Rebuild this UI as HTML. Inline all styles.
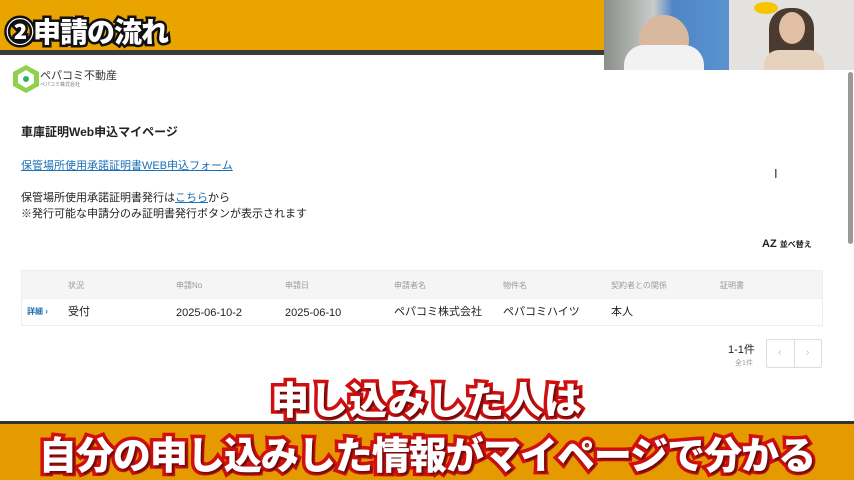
<!DOCTYPE html>
<html><head><meta charset="utf-8"><style>
*{margin:0;padding:0;box-sizing:border-box}
body{width:854px;height:480px;overflow:hidden;background:#fff;position:relative;font-family:"Liberation Sans","Noto Sans CJK JP",sans-serif;color:#222}
.abs{position:absolute}
.top{left:0;top:0;width:854px;height:50px;background:#e9a400}
.topline{left:0;top:50px;width:854px;height:5px;background:#3a3a3a}
.title{left:6px;top:11px;font-size:28px;font-weight:900;color:#fff;letter-spacing:-1px;-webkit-text-stroke:5px #111;paint-order:stroke fill;text-shadow:2px 2px 0 #111}
.cam1{left:604px;top:0;width:125px;height:70px;background:linear-gradient(90deg,#8a8f88 0,#c9cccb 40%,#4f86c6 55%,#5a93d0 100%)}
.cam2{left:729px;top:0;width:125px;height:70px;background:#e4e2df}
.sub{font-weight:900;color:#fff;-webkit-text-stroke:7px #d01010;paint-order:stroke fill;text-shadow:2px 2px 2px rgba(0,0,0,.5);white-space:nowrap}
.bot{left:0;top:424px;width:854px;height:56px;background:#e59a00}
.botline{left:0;top:421px;width:854px;height:4px;background:#333}
.sb{left:848px;top:72px;width:5px;height:172px;background:#999;border-radius:3px}
.r{font-size:11px;line-height:14px}
</style></head><body>
<div class="abs top"></div><div class="abs topline"></div>
<div class="abs title">②申請の流れ</div>
<div class="abs cam1"><div class="abs" style="left:35px;top:15px;width:50px;height:50px;border-radius:50%;background:#d8b9a0"></div><div class="abs" style="left:20px;top:45px;width:80px;height:25px;background:#f2f2f2;border-radius:20px 20px 0 0"></div></div>
<div class="abs cam2"><div class="abs" style="left:25px;top:2px;width:24px;height:12px;border-radius:50%;background:#f7c400"></div><div class="abs" style="left:40px;top:8px;width:45px;height:62px;border-radius:20px;background:#4a3a30"></div><div class="abs" style="left:50px;top:12px;width:26px;height:32px;border-radius:50%;background:#e0bfa5"></div><div class="abs" style="left:35px;top:50px;width:60px;height:20px;background:#e6d2bd;border-radius:15px 15px 0 0"></div></div>
<div class="abs sb"></div>
<svg class="abs" style="left:12px;top:64px" width="28" height="30" viewBox="0 0 28 30"><polygon points="14,1 27,8 27,22 14,29 1,22 1,8" fill="#8fd14f"/><polygon points="14,6 22,11 22,19 14,24 6,19 6,11" fill="#fff"/><circle cx="14" cy="15" r="3" fill="#2fb36c"/></svg>
<div class="abs" style="left:40px;top:67px;font-size:11px;color:#333">ペパコミ不動産</div>
<div class="abs" style="left:40px;top:81px;font-size:5px;color:#777">ペパコミ株式会社</div>
<div class="abs" style="left:21px;top:123px;font-size:12px;font-weight:bold">車庫証明Web申込マイページ</div>
<div class="abs" style="left:21px;top:157px;font-size:11px;color:#1a6fb5;text-decoration:underline">保管場所使用承諾証明書WEB申込フォーム</div>
<div class="abs" style="left:21px;top:189px;font-size:11px">保管場所使用承諾証明書発行は<span style="color:#1a6fb5;text-decoration:underline">こちら</span>から</div>
<div class="abs" style="left:21px;top:205px;font-size:11px">※発行可能な申請分のみ証明書発行ボタンが表示されます</div>
<div class="abs" style="left:774px;top:166px;font-size:13px;color:#333">I</div>
<div class="abs" style="left:762px;top:238px;font-size:11px;font-weight:bold">AZ <span style="font-size:8px">並べ替え</span></div>
<div class="abs" style="left:21px;top:270px;width:802px;height:56px;border:1px solid #eee">
<div class="abs" style="left:0;top:0;width:800px;height:27px;background:#f5f5f5"></div>
<div class="abs" style="left:0;top:27px;width:800px;height:1px;background:#eee"></div>
<div class="abs" style="left:46px;top:9px;font-size:8px;color:#999">状況</div>
<div class="abs" style="left:154px;top:9px;font-size:8px;color:#999">申請No</div>
<div class="abs" style="left:263px;top:9px;font-size:8px;color:#999">申請日</div>
<div class="abs" style="left:372px;top:9px;font-size:8px;color:#999">申請者名</div>
<div class="abs" style="left:481px;top:9px;font-size:8px;color:#999">物件名</div>
<div class="abs" style="left:589px;top:9px;font-size:8px;color:#999">契約者との関係</div>
<div class="abs" style="left:698px;top:9px;font-size:8px;color:#999">証明書</div>
<div class="abs" style="left:5px;top:35px;font-size:8px;color:#1a6fb5;font-weight:bold">詳細 ›</div>
<div class="abs r" style="left:46px;top:34px">受付</div>
<div class="abs r" style="left:154px;top:35px">2025-06-10-2</div>
<div class="abs r" style="left:263px;top:35px">2025-06-10</div>
<div class="abs r" style="left:372px;top:34px">ペパコミ株式会社</div>
<div class="abs r" style="left:481px;top:34px">ペパコミハイツ</div>
<div class="abs r" style="left:589px;top:34px">本人</div>
</div>
<div class="abs" style="left:728px;top:341px;font-size:11px">1-1件</div>
<div class="abs" style="left:735px;top:358px;font-size:7px;color:#999">全1件</div>
<div class="abs" style="left:766px;top:339px;width:56px;height:29px;border:1px solid #ddd;border-radius:2px"><div class="abs" style="left:27px;top:0;width:1px;height:27px;background:#ddd"></div><div class="abs" style="left:11px;top:7px;font-size:10px;color:#bbb">‹</div><div class="abs" style="left:39px;top:7px;font-size:10px;color:#bbb">›</div></div>
<div class="abs botline"></div><div class="abs bot"></div>
<div class="abs sub" style="left:0;width:854px;text-align:center;top:370px;font-size:38px;letter-spacing:1px">申し込みした人は</div>
<div class="abs sub" style="left:0;width:854px;text-align:center;top:425px;font-size:38px;letter-spacing:-1px">自分の申し込みした情報がマイページで分かる</div>
</body></html>
